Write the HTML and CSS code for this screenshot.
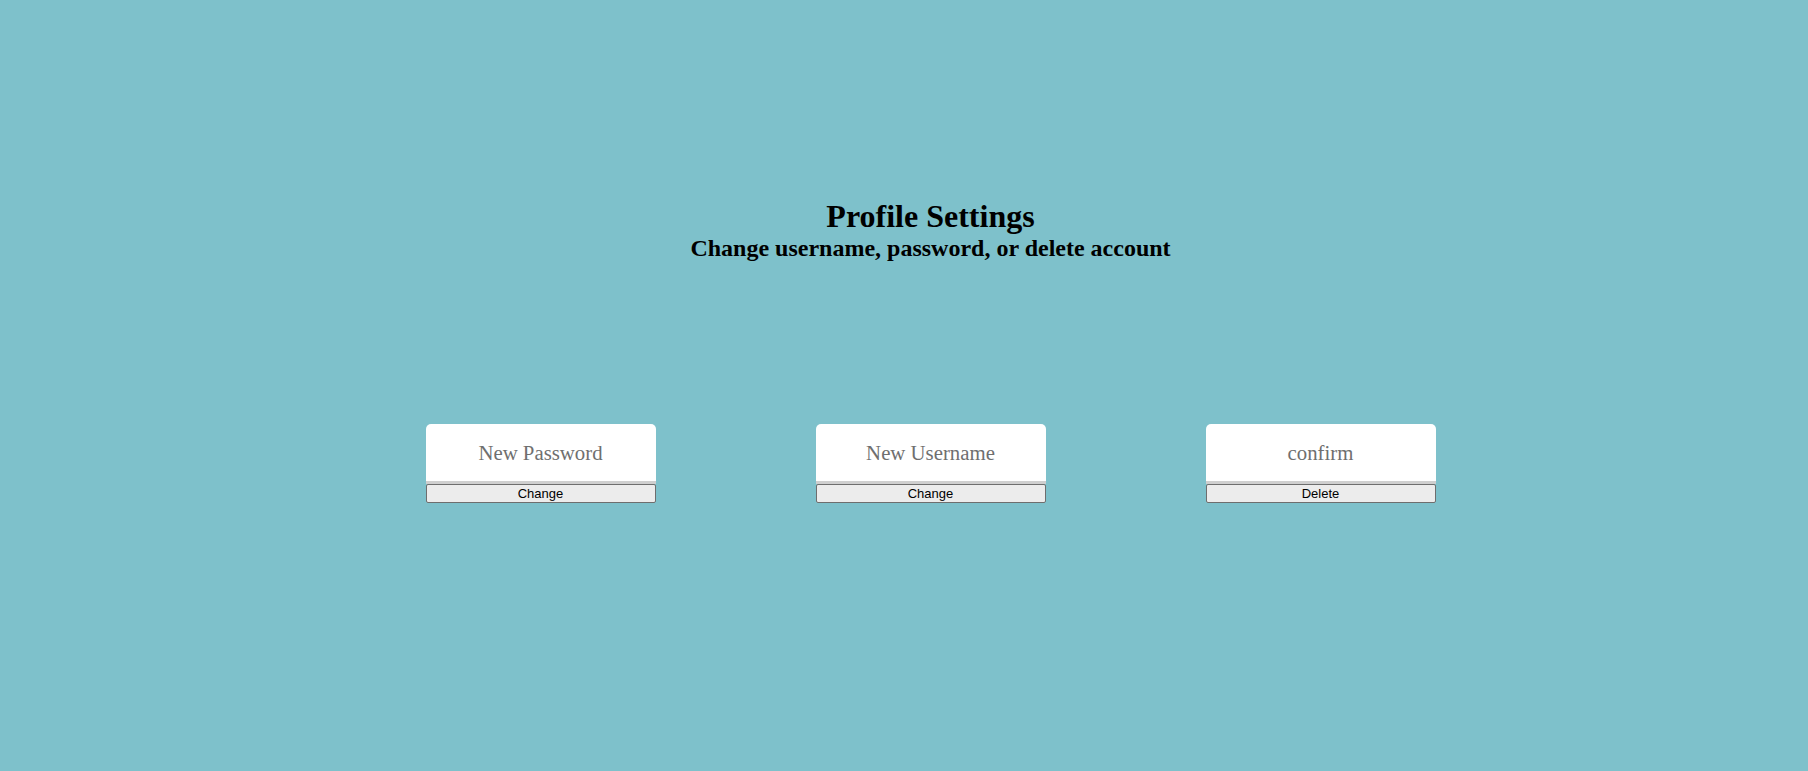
FILE: index.html
```html
<!DOCTYPE html>
<html lang="en">
<head>
<meta charset="utf-8">
<title>Profile Settings</title>
<link rel="stylesheet" href="styles.css">
</head>
<body>
<main class="page">
  <header class="heading">
    <h1 class="title">Profile Settings</h1>
    <h2 class="subtitle">Change username, password, or delete account</h2>
  </header>
  <section class="forms">
    <form class="field">
      <input class="field-input" type="password" placeholder="New Password">
      <button class="field-button" type="button">Change</button>
    </form>
    <form class="field">
      <input class="field-input" type="text" placeholder="New Username">
      <button class="field-button" type="button">Change</button>
    </form>
    <form class="field">
      <input class="field-input" type="text" placeholder="confirm">
      <button class="field-button" type="button">Delete</button>
    </form>
  </section>
</main>
</body>
</html>
```
FILE: styles.css
```css
html, body {
  margin: 0;
  height: 100%;
}
body {
  background: #7ec1cb;
  font-family: "Liberation Serif", "Times New Roman", serif;
  color: #000;
}
.page {
  padding-left: 53px;
  padding-top: 198px;
  box-sizing: border-box;
  height: 100%;
}
.heading {
  text-align: center;
}
.title {
  margin: 0;
  font-size: 32px;
  line-height: normal;
  font-weight: bold;
}
.subtitle {
  margin: 0;
  font-size: 24px;
  line-height: normal;
  font-weight: bold;
}
.forms {
  display: grid;
  grid-template-columns: repeat(3, 390px);
  justify-content: center;
  justify-items: center;
  margin-top: 162px;
}
.field {
  display: flex;
  flex-direction: column;
  width: 230px;
  margin: 0;
}
.field-input {
  box-sizing: border-box;
  width: 230px;
  height: 60px;
  border: none;
  border-bottom: 3px solid #cfcfcf;
  border-radius: 5px 5px 0 0;
  background: #fff;
  font-family: "Liberation Serif", "Times New Roman", serif;
  font-size: 20.8px;
  text-align: center;
  padding: 0 4px;
  outline: none;
}
.field-input::placeholder {
  color: #6f6f6f;
}
.field-button {
  box-sizing: border-box;
  width: 230px;
  height: 19px;
  margin: 0;
  padding: 0;
  border: 1px solid #6e6e6e;
  border-radius: 2px;
  background: #ececec;
  font-family: "Liberation Sans", Arial, sans-serif;
  font-size: 13px;
  line-height: 16px;
  color: #000;
}
```
